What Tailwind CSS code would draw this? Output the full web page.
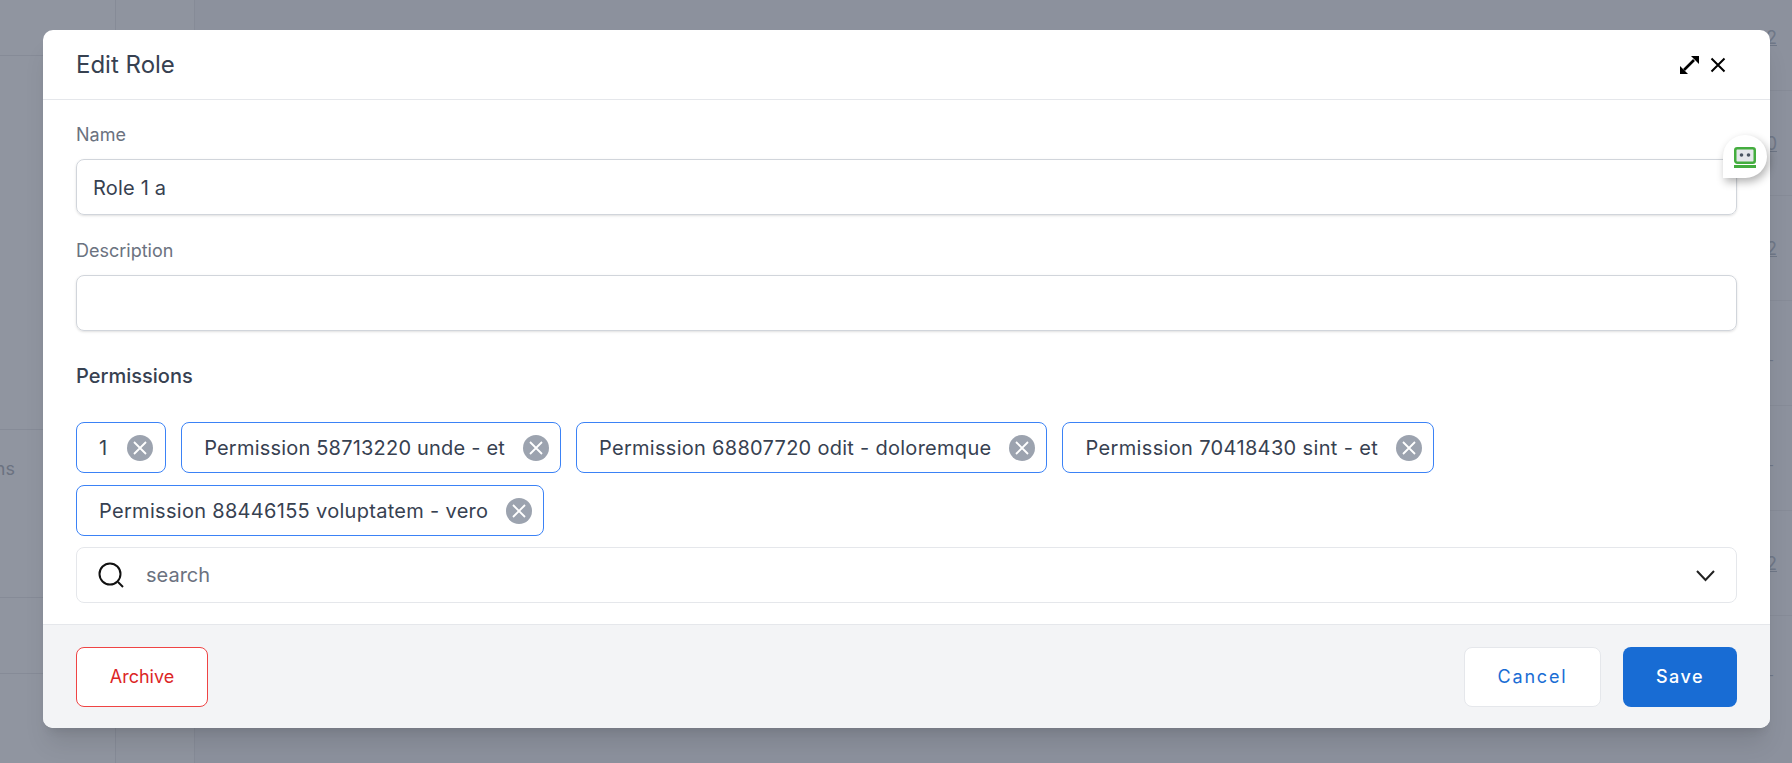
<!DOCTYPE html>
<html lang="en">
<head>
    <meta charset="UTF-8">
    <title>Edit Role</title>
    <script src="https://cdn.jsdelivr.net/npm/@tailwindcss/browser@4"></script>
</head>
<body class="h-[763px] overflow-hidden bg-white font-['Inter',sans-serif]">
    <div class="relative h-[763px] w-full overflow-hidden bg-[#8c919d]">

        <!-- Page behind the overlay -->
        <div class="absolute inset-0 flex">
            <div class="h-full w-[116px] border-r border-[#868b97] bg-[#9095a0]">
                <div class="h-[56px] border-b border-[#868b97]"></div>
                <div class="h-[374px] border-b border-[#868b97]"></div>
                <div class="h-[168px] border-b border-[#868b97] pt-[25px] text-[18px] leading-7 text-[#6b7280]"><span class="flex w-[15px] justify-end whitespace-nowrap">Permissions</span></div>
                <div class="h-[76px] border-b border-[#868b97]"></div>
            </div>
            <div class="h-full w-[79px] border-r border-[#868b97] bg-[#8f949f]"></div>
            <div class="h-full flex-1 bg-[#8c919d]">
                <div class="ml-auto flex w-[40px] flex-col text-[18px] text-[#6f7787]">
                    <div class="flex h-[91px] items-center justify-end border-b border-[#868b97] pb-[15px] pr-[15px] underline">2</div>
                    <div class="flex h-[105px] items-center justify-end border-b border-[#868b97] pr-[15px] underline">0</div>
                    <div class="flex h-[105px] items-center justify-end border-b border-[#868b97] pr-[15px] underline">2</div>
                    <div class="flex h-[105px] items-center justify-end border-b border-[#868b97] pt-[12px] pr-[18px] text-[14px]">-</div>
                    <div class="flex h-[105px] items-center justify-end border-b border-[#868b97] pt-[12px] pr-[18px] text-[14px]">-</div>
                    <div class="flex h-[105px] items-center justify-end border-b border-[#868b97] pr-[15px] underline">2</div>
                    <div class="flex h-[105px] items-center justify-end pt-[12px] pr-[18px] text-[14px]">-</div>
                </div>
            </div>
        </div>

        <!-- Modal -->
        <div class="absolute left-[43px] top-[30px] flex h-[698px] w-[1727px] flex-col overflow-hidden rounded-[10px] bg-white shadow-xl">
            <div class="flex h-[70px] shrink-0 items-center justify-between border-b border-[#e5e7eb] pl-[33px] pr-[40px]">
                <h1 class="text-[24px] font-normal text-[#374151]">Edit Role</h1>
                <div class="flex items-center gap-[5px]">
                    <svg class="h-6 w-6" viewBox="0 0 24 24" fill="none" stroke="#000" stroke-width="2.6">
                        <path d="M7 17 17 7"/>
                        <path d="M14 3h8v8z" fill="#000" stroke="none"/>
                        <path d="M3 13v8h8z" fill="#000" stroke="none"/>
                    </svg>
                    <svg class="h-6 w-6" viewBox="0 0 24 24" fill="none" stroke="#000" stroke-width="2">
                        <path d="M5.500 5.500l13 13M18.500 5.500l-13 13"/>
                    </svg>
                </div>
            </div>

            <div class="flex-1 px-[33px] pt-[21px]">
                <label class="block text-[18px] leading-7 text-[#6b7280]">Name</label>
                <input value="Role 1 a" class="mt-[10px] block h-14 w-full rounded-lg border border-[#d1d5db] px-4 pt-[1px] text-[20px] tracking-[0.2px] text-[#374151] shadow-sm">
                <label class="mt-[22px] block text-[18px] leading-7 text-[#6b7280]">Description</label>
                <input class="mt-[10px] block h-14 w-full rounded-lg border border-[#d1d5db] px-4 text-[20px] text-[#374151] shadow-sm">
                <h2 class="mt-[31px] text-[20px] font-medium leading-7 text-[#374151]">Permissions</h2>

                <div class="mt-[32px] flex flex-wrap gap-x-[15px] gap-y-[12px] text-[20px] text-[#374151]">
                    <div class="flex h-[51px] items-center rounded-lg border border-[#3b82f6] pl-[22px] pr-[12px]">1<span class="ml-[20px] flex h-[26px] w-[26px] items-center justify-center rounded-full bg-[#9ca3af]"><svg class="h-4 w-4" viewBox="0 0 16 16" stroke="#fff" stroke-width="1.8"><path d="M2 2l12 12M14 2 2 14"/></svg></span></div>
                    <div class="flex h-[51px] items-center rounded-lg border border-[#3b82f6] pl-[22px] pr-[11px] tracking-[0.2px]">Permission 58713220 unde - et<span class="ml-[18px] flex h-[26px] w-[26px] items-center justify-center rounded-full bg-[#9ca3af]"><svg class="h-4 w-4" viewBox="0 0 16 16" stroke="#fff" stroke-width="1.8"><path d="M2 2l12 12M14 2 2 14"/></svg></span></div>
                    <div class="flex h-[51px] items-center rounded-lg border border-[#3b82f6] pl-[22px] pr-[11px] tracking-[0.28px]">Permission 68807720 odit - doloremque<span class="ml-[18px] flex h-[26px] w-[26px] items-center justify-center rounded-full bg-[#9ca3af]"><svg class="h-4 w-4" viewBox="0 0 16 16" stroke="#fff" stroke-width="1.8"><path d="M2 2l12 12M14 2 2 14"/></svg></span></div>
                    <div class="flex h-[51px] items-center rounded-lg border border-[#3b82f6] pl-[22px] pr-[11px] tracking-[0.35px]">Permission 70418430 sint - et<span class="ml-[18px] flex h-[26px] w-[26px] items-center justify-center rounded-full bg-[#9ca3af]"><svg class="h-4 w-4" viewBox="0 0 16 16" stroke="#fff" stroke-width="1.8"><path d="M2 2l12 12M14 2 2 14"/></svg></span></div>
                    <div class="flex h-[51px] items-center rounded-lg border border-[#3b82f6] pl-[22px] pr-[11px] tracking-[0.3px]">Permission 88446155 voluptatem - vero<span class="ml-[18px] flex h-[26px] w-[26px] items-center justify-center rounded-full bg-[#9ca3af]"><svg class="h-4 w-4" viewBox="0 0 16 16" stroke="#fff" stroke-width="1.8"><path d="M2 2l12 12M14 2 2 14"/></svg></span></div>
                </div>

                <div class="mt-[11px] flex h-14 items-center rounded-lg border border-[#e5e7eb] pl-[21px] pr-[20px]">
                    <svg class="h-[26px] w-[26px] shrink-0" viewBox="0 0 26 26" fill="none" stroke="#111" stroke-width="2"><circle cx="12" cy="12" r="10.500"/><path d="M20 20l5 5"/></svg>
                    <span class="ml-[22px] flex-1 text-[20px] text-[#6b7280]">search</span>
                    <svg class="h-5 w-5" viewBox="0 0 20 20" fill="none" stroke="#222" stroke-width="2"><path d="M1 6l8.500 9L18 6"/></svg>
                </div>
            </div>

            <div class="flex h-[104px] shrink-0 items-center justify-between border-t border-[#e5e7eb] bg-[#f3f4f6] px-[33px]">
                <button class="h-[60px] w-[132px] rounded-lg border border-[#ef4444] bg-white text-[18px] font-normal text-[#dc2626]">Archive</button>
                <div class="flex gap-[22px]">
                    <button class="h-[60px] w-[137px] rounded-lg border border-[#e5e7eb] bg-white text-[18px] font-normal tracking-widest text-[#1a6dd4]">Cancel</button>
                    <button class="h-[60px] w-[114px] rounded-lg bg-[#186cd4] text-[18px] font-medium tracking-[0.08em] text-white">Save</button>
                </div>
            </div>
        </div>

        <!-- Password manager badge -->
        <div class="absolute left-[1723px] top-[135px] flex h-[43px] w-[44px] items-center justify-center rounded-[22px] rounded-bl-none bg-white shadow-[2px_4px_8px_rgba(0,0,0,0.3)]">
            <svg class="h-6 w-6" viewBox="0 0 24 24">
                <rect x="2.250" y="3.250" width="19.500" height="14.500" rx="2" fill="#e5e7eb" stroke="#44ad3f" stroke-width="2.500"/>
                <circle cx="8.500" cy="10" r="1.800" fill="#4b5563"/>
                <circle cx="15.500" cy="10" r="1.800" fill="#4b5563"/>
                <rect x="1" y="20" width="22" height="3" fill="#44ad3f"/>
            </svg>
        </div>
    </div>
</body>
</html>
